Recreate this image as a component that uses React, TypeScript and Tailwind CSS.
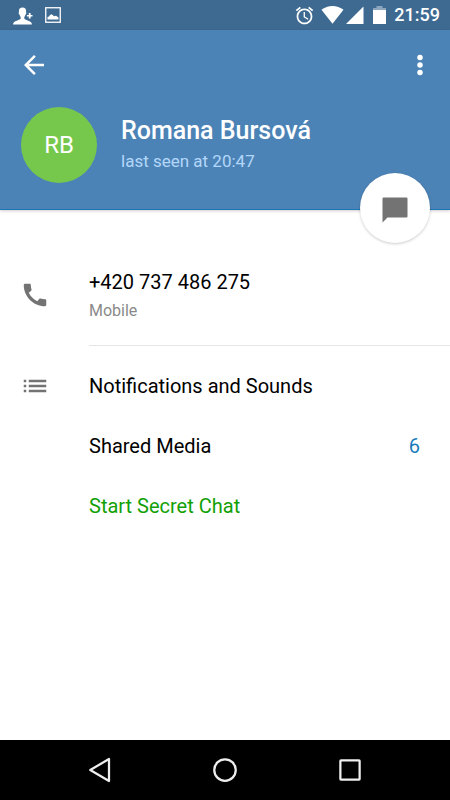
import type { ReactNode } from "react";

interface IconProps {
  children: ReactNode;
  className?: string;
}

function Icon({ children, className = "size-[30px]" }: IconProps) {
  return (
    <svg viewBox="0 0 24 24" fill="currentColor" aria-hidden="true" className={`block shrink-0 ${className}`}>
      {children}
    </svg>
  );
}

function StatusBar() {
  return (
    <div className="flex h-[30px] items-center justify-between bg-[#3e6a92] pr-[10px] pl-3 text-white">
      <div className="flex items-center gap-3">
        <svg width="21" height="20" viewBox="0 -2 21 20" fill="currentColor" aria-hidden="true">
          <path d="M10.500.500C8 .5 6.900 2 6.900 4c0 .7.100 1 .100 1.200-.400.200-.400.900-.200 1.500.100.500.400.800.700.900.200 1.100.700 1.900 1.200 2.400v1.600c-.500 1.300-4.800 2.200-6.500 3.400-.700.600-1.100 1.400-1.200 2.600h18.900c-.1-1.200-.4-2-1.200-2.600-1.600-1.200-5.900-2.100-6.400-3.400V10c.500-.5 1-1.300 1.200-2.400.3-.1.600-.400.700-.900.200-.6.200-1.300-.2-1.500 0-.2.100-.5.100-1.200 0-2-1.100-3.500-3.600-3.500z" />
          <path d="M16.800 6h1.800v1.900h1.900v1.700h-1.900v1.900h-1.800V9.600h-1.900V7.900h1.900z" />
        </svg>
        <svg width="16" height="16" viewBox="0 0 16 16" aria-hidden="true">
          <rect x=".75" y=".75" width="14.500" height="14.500" fill="none" stroke="currentColor" strokeWidth="1.300" />
          <path d="M2.500 12.500V10l1.500-.500 1-1.500 1.500-.800 1.500 1 1 1 2-.400 1.500 1 1 .700v2z" fill="currentColor" />
        </svg>
      </div>
      <div className="flex items-center">
        <Icon className="size-[21px]">
          <path d="M22 5.720l-4.600-3.860-1.290 1.530 4.600 3.860L22 5.720zM7.880 3.390L6.600 1.860 2 5.710l1.290 1.530 4.590-3.850zM12.500 8H11v6l4.750 2.850.75-1.230-4-2.370V8zM12 4c-4.970 0-9 4.030-9 9s4.020 9 9 9c4.970 0 9-4.030 9-9s-4.030-9-9-9zm0 16c-3.870 0-7-3.130-7-7s3.130-7 7-7 7 3.130 7 7-3.130 7-7 7z" />
        </Icon>
        <svg width="44" height="18" viewBox="0 0 44 18" fill="currentColor" aria-hidden="true" className="ml-[6px]">
          <path d="M11.500 17.700.500 3.800C3.700 1.300 7.400 0 11.500 0s7.800 1.300 11 3.800z" />
          <path d="M25 18 42.500.500V18z" />
        </svg>
        <svg width="13" height="18" viewBox="0 0 13 18" aria-hidden="true" className="ml-2">
          <path d="M3.500 0h6v2H13v3H0V2h3.500z" fill="#8ba6be" />
          <path d="M0 4h13v14H0z" fill="currentColor" />
        </svg>
        <span className="ml-2 text-lg leading-8 font-medium">21:59</span>
      </div>
    </div>
  );
}

function ProfileHeader() {
  return (
    <header className="relative h-[180px] border-b border-[#1c74b4] bg-[#4c83b6] px-[19px] pt-5 text-white shadow-[0_1px_3px_rgba(0,0,0,0.2)]">
      <div className="flex justify-between">
        <button type="button" aria-label="Back">
          <Icon>
            <path d="M20 11H7.830l5.590-5.590L12 4l-8 8 8 8 1.410-1.410L7.830 13H20v-2z" />
          </Icon>
        </button>
        <button type="button" aria-label="More options" className="-mr-1">
          <Icon>
            <circle cx="12" cy="6" r="2.200" />
            <circle cx="12" cy="12" r="2.200" />
            <circle cx="12" cy="18" r="2.200" />
          </Icon>
        </button>
      </div>
      <div className="mt-[27px] flex items-center gap-6 pl-[2px]">
        <div className="flex size-[76px] shrink-0 items-center justify-center rounded-full bg-[#76c84d] text-2xl">
          RB
        </div>
        <div>
          <h1 className="text-[25px] leading-8 font-medium">Romana Bursová</h1>
          <p className="text-[17px] leading-7 text-[#b3d7fa]">last seen at 20:47</p>
        </div>
      </div>
      <button
        type="button"
        aria-label="Send message"
        className="absolute right-5 -bottom-[34px] flex size-[70px] items-center justify-center rounded-full bg-white pt-1 text-[#737373] shadow-[0_1px_3px_rgba(0,0,0,0.2)]"
      >
        <Icon>
          <path d="M21.200 2H2.800c-.5 0-.8.300-.8.800V22l4-4h15.200c.5 0 .8-.300.800-.8V2.800c0-.5-.3-.8-.8-.8z" />
        </Icon>
      </button>
    </header>
  );
}

function NavigationBar() {
  return (
    <nav className="flex h-[60px] bg-black px-[37px] text-[#eeeeee]">
      <button type="button" aria-label="Back" className="flex flex-1 items-center justify-center">
        <Icon>
          <path d="M19.200 3.200v17.600L4.200 12z" fill="none" stroke="currentColor" strokeWidth="1.800" strokeLinejoin="round" />
        </Icon>
      </button>
      <button type="button" aria-label="Home" className="flex flex-1 items-center justify-center">
        <Icon>
          <circle cx="12" cy="12" r="8.600" fill="none" stroke="currentColor" strokeWidth="1.800" />
        </Icon>
      </button>
      <button type="button" aria-label="Recent apps" className="flex flex-1 items-center justify-center">
        <Icon>
          <rect x="4.300" y="4.300" width="15.400" height="15.400" rx=".5" fill="none" stroke="currentColor" strokeWidth="1.800" />
        </Icon>
      </button>
    </nav>
  );
}

export default function App() {
  return (
    <div className="flex min-h-screen flex-col bg-white font-[Roboto,sans-serif] text-xl text-black">
      <StatusBar />
      <ProfileHeader />
      <main className="flex-1 pt-[34px]">
        <section className="flex items-center pl-5">
          <span className="text-[#737373]">
            <Icon>
              <path d="M20.010 15.380c-1.230 0-2.420-.2-3.530-.56-.35-.12-.74-.03-1.010.24l-1.570 1.970c-2.830-1.350-5.480-3.900-6.890-6.830l1.950-1.660c.27-.28.35-.67.24-1.020-.37-1.110-.56-2.300-.56-3.530 0-.54-.45-.99-.99-.99H4.190C3.650 3 3 3.240 3 3.990 3 13.280 10.730 21 20.010 21c.71 0 .99-.63.99-1.180v-3.450c0-.54-.45-.99-.99-.99z" />
            </Icon>
          </span>
          <div className="ml-[39px] flex-1 border-b border-[#e5e5e5] pt-6 pb-5">
            <p className="leading-7">+420 737 486 275</p>
            <p className="text-base leading-[29px] text-[#8a8a8a]">Mobile</p>
          </div>
        </section>
        <ul className="pt-[10px]">
          <li>
            <button type="button" className="flex h-[60px] w-full items-center pl-5 text-left">
              <span className="text-[#737373]">
                <Icon>
                  <path d="M3 13h2v-2H3v2zm0 4h2v-2H3v2zm0-8h2V7H3v2zm4 4h14v-2H7v2zm0 4h14v-2H7v2zM7 7v2h14V7H7z" />
                </Icon>
              </span>
              <span className="ml-[39px]">Notifications and Sounds</span>
            </button>
          </li>
          <li>
            <button type="button" className="flex h-[60px] w-full items-center justify-between pr-[30px] pl-[89px] text-left">
              <span>Shared Media</span>
              <span className="text-[#1a7dbb]">6</span>
            </button>
          </li>
          <li>
            <button type="button" className="flex h-[60px] w-full items-center pl-[89px] text-left text-[#12a005]">
              Start Secret Chat
            </button>
          </li>
        </ul>
      </main>
      <NavigationBar />
    </div>
  );
}
